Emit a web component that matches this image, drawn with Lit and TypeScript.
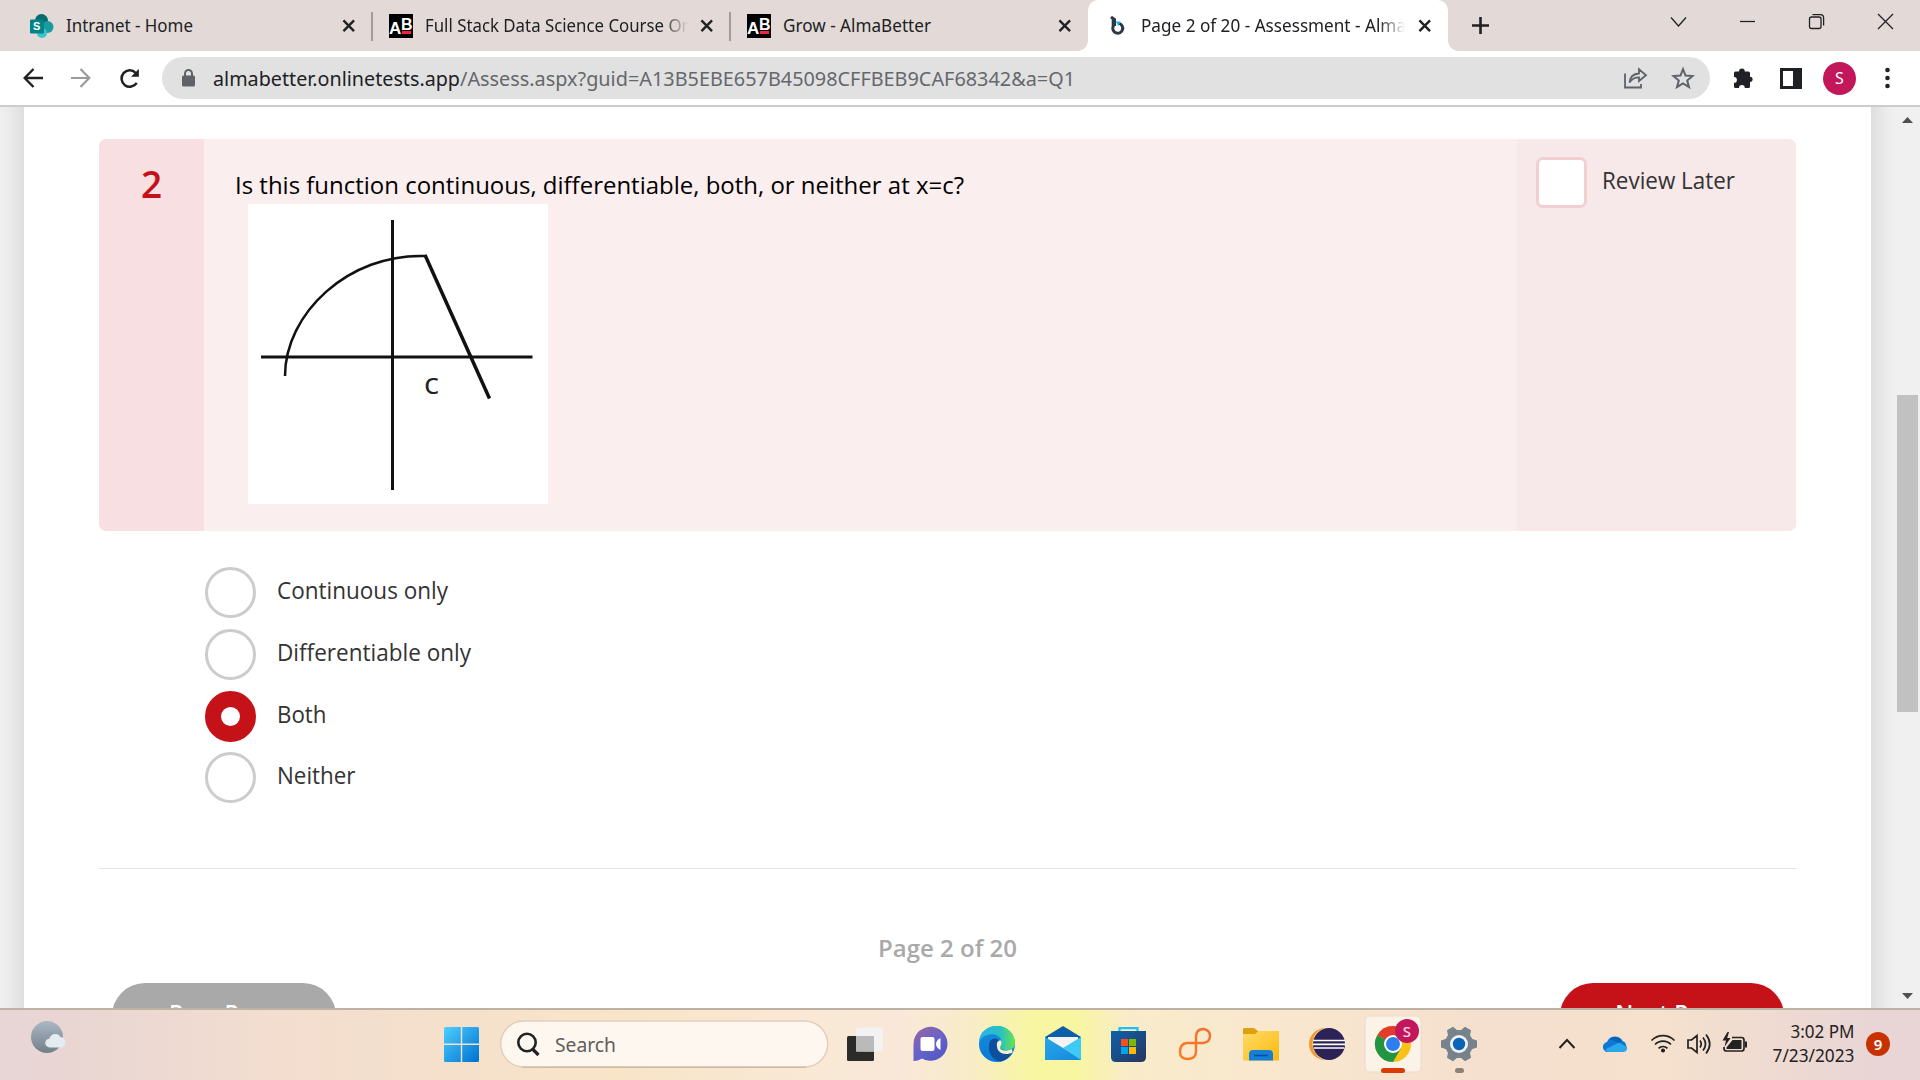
import { LitElement, html, svg, css } from "lit";
import { customElement } from "lit/decorators.js";

const closeX = html`<svg class="tx" viewBox="0 0 14 14"><path d="M1.5 1.5 12.5 12.5M12.5 1.5 1.5 12.5" /></svg>`;
const abIcon = html`<span class="ab"><b class="la">A</b><b class="lb">B</b><i></i></span>`;

@customElement("app-root")
export class AppRoot extends LitElement {
  static styles = css`
    :host { display: flex; flex-direction: column; width: 1920px; height: 1080px; overflow: hidden; background: #fff; font-family: "Noto Sans", "Open Sans", sans-serif; color: #202124; }
    * { box-sizing: border-box; }
    svg { display: block; flex: none; overflow: visible; }
    .strip { height: 51px; background: #e3dad7; display: flex; flex: none; }
    .tab { display: flex; align-items: center; height: 51px; flex: none; position: relative; }
    .t1 { width: 372px; padding-left: 30px; }
    .t2 { width: 358px; padding-left: 17px; }
    .t3 { width: 358px; padding-left: 17px; }
    .t4 { width: 360px; padding-left: 22px; background: #fff; border-radius: 10px 10px 0 0; }
    .t4::before, .t4::after { content: ""; position: absolute; bottom: 0; width: 10px; height: 10px; }
    .t4::before { left: -10px; background: radial-gradient(circle at 0 0, #e3dad7 9.5px, #fff 10px); }
    .t4::after { right: -10px; background: radial-gradient(circle at 100% 0, #e3dad7 9.5px, #fff 10px); }
    .ico { width: 24px; height: 24px; margin-right: 12px; }
    .bico { width: 16px; height: 20px; margin-right: 15px; }
    .title { height: 30px; white-space: nowrap; flex: none; }
    .title svg { height: 30px; }
    .title text { font: 18px "Noto Sans", sans-serif; fill: #202124; }
    .fade { overflow: hidden; -webkit-mask-image: linear-gradient(90deg, #000 calc(100% - 26px), transparent); mask-image: linear-gradient(90deg, #000 calc(100% - 26px), transparent); }
    .tx { width: 13.5px; height: 13.5px; margin-left: auto; margin-right: 17px; }
    .tx path { stroke: #202124; stroke-width: 2.5; }
    .sep::after { content: ""; position: absolute; right: -1px; top: 12px; width: 2px; height: 29px; background: #a19b99; }
    .ab { width: 24px; height: 24px; background: #000; margin-right: 12px; position: relative; overflow: hidden; color: #fff; font-family: "Liberation Sans", sans-serif; flex: none; }
    .ab b { position: absolute; font-size: 17px; line-height: 17px; }
    .ab .la { left: 0; top: 6px; }
    .ab .lb { left: 12px; top: 2px; font-size: 16px; }
    .ab i { position: absolute; left: 13px; top: 17.5px; width: 9px; height: 2.5px; background: #f22540; }
    .caps { margin-left: auto; display: flex; padding: 14px 27px 0 0; gap: 54px; }
    .caps svg { width: 15px; height: 15px; }
    .caps path, .caps rect { fill: none; stroke: #202124; stroke-width: 1.3; }
    .plus { margin: 17px 0 0 24px; width: 17px; height: 17px; }
    .tool { height: 56px; flex: none; display: flex; align-items: center; padding: 0 0 0 23px; border-bottom: 2px solid #cccccc; }
    .tool .bk { width: 20px; height: 20px; margin-right: 28px; }
    .tool .rl { width: 21px; height: 21px; margin-right: 22px; }
    .omni { width: 1548px; height: 42px; border-radius: 21px; background: #e1e1e1; display: flex; align-items: center; padding: 0 16px 0 20px; }
    .omni .url { margin-left: 18px; width: 864px; height: 42px; }
    .url text { font: 20px "Noto Sans", sans-serif; }
    .omni .right { margin-left: auto; display: flex; gap: 25px; align-items: center; }
    .puzzle { margin-left: 23px; }
    .side { margin-left: 26px; }
    .dots { margin-left: 29px; }
    .av { margin-left: 21px; width: 33px; height: 33px; border-radius: 50%; background: #c2185b; color: #fff; display: grid; place-items: center; font-size: 16px; }
    .main { height: 901px; flex: none; display: flex; overflow: hidden; background: #f0f0f0; }
    .ls { width: 24px; flex: none; background: linear-gradient(90deg, #f0f0f0, #e9e9e9 50%, #dedede); }
    .rs { width: 24px; flex: none; background: linear-gradient(90deg, #dedede, #e9e9e9 50%, #f0f0f0); }
    .bar { width: 25px; background: #f0f0f0; display: flex; flex-direction: column; align-items: center; padding: 10px 0 9px; flex: none; }
    .bar i { width: 21px; height: 317px; background: #c1c1c1; margin-top: 272px; }
    .bar svg { width: 11px; height: 6px; fill: #505050; }
    .bar .dn { margin-top: auto; }
    .panel { width: 1847px; flex: none; background: #fff; padding: 32px 75px 0; font-family: "Open Sans", sans-serif; }
    .card { height: 392px; display: flex; border-radius: 7px; overflow: hidden; }
    .num { width: 105px; flex: none; background: #f7dfe2; color: #c41218; font-size: 37px; font-weight: 600; text-align: center; line-height: 50px; padding-top: 20px; }
    .q { width: 1313px; flex: none; background: #faeeee; padding: 29px 0 0 31px; }
    svg.line { height: 36px; width: 760px; }
    .q .graph { margin-left: 13px; width: 300px; height: 300px; background: #fff; }
    .rev { flex: 1; background: #f7e8e9; display: flex; padding: 18px 0 0 19px; gap: 15px; }
    .box { width: 51px; height: 51px; border: 3px solid #f4cfd2; border-radius: 7px; background: #fff; flex: none; }
    .rev svg { width: 160px; height: 51px; }
    .opts { margin: 36px 0 0 106px; display: flex; flex-direction: column; gap: 11px; height: 236px; }
    .o { display: flex; gap: 21px; height: 51px; flex: none; }
    .o:last-child { margin-top: -1px; }
    .o .r { width: 51px; height: 51px; border: 3px solid #cccccc; border-radius: 50%; flex: none; }
    .o .on { border: 16px solid #c41218; }
    .o svg { width: 300px; height: 51px; }
    .panel text { font: 24px "Open Sans", sans-serif; fill: #333; }
    .hr { height: 1px; background: #e4e4e4; margin-top: 65px; }
    .pg { margin-left: 779px; margin-top: 62px; width: 160px; height: 40px; }
    .panel .pg text { font-weight: 600; fill: #a9a9a9; }
    .btns { display: flex; justify-content: space-between; padding: 0 12.5px; margin-top: 12px; }
    .btn { width: 224px; height: 66px; border-radius: 33px; background: #a9a9a9; color: #fff; font-weight: 600; font-size: 23px; text-align: center; line-height: 61px; }
    .btn.red { background: #c41218; }
    .task { height: 72px; flex: none; border-top: 2px solid #bfb1a3; background: linear-gradient(90deg, #e8d5d6 0, #e9d6d3 70px, #f2ddd0 260px, #f4e0cc 420px, #f8e5c8 620px, #f8e8d4 800px, #f9e8d9 900px, #f8ecc8 970px, #f8f6a0 1035px, #f8f6a0 1075px, #f9ebca 1130px, #f9e8ce 1250px, #f5dfcf 1500px, #f5e1cd 1660px, #e9d5d5 1870px); display: flex; }
    .task > svg { width: 1920px; height: 70px; }
  `;

  label(text: string, width: number, baseline: number, cls = "", fill = "#333") {
    return html`<svg class=${cls}><text x="0" y=${baseline} textLength=${width} lengthAdjust="spacingAndGlyphs" fill=${fill} style="fill:${fill}">${text}</text></svg>`;
  }

  tabTitle(text: string, box: number, width: number, fade = false) {
    return html`<div class="title ${fade ? "fade" : ""}" style="width:${box}px"><svg width=${box}><text x="0" y="21" textLength=${width} lengthAdjust="spacingAndGlyphs">${text}</text></svg></div>`;
  }

  chrome() {
    return html`
      <div class="strip">
        <div class="tab t1 sep">
          <svg class="ico" viewBox="0 0 24 24"><circle cx="11.5" cy="6.5" r="6.5" fill="#036c70"/><circle cx="17.5" cy="13" r="6" fill="#1a9ba1"/><circle cx="12" cy="19" r="5" fill="#37c6d0"/><rect y="5.5" width="14" height="14" rx="1.2" fill="#038387"/><text x="6.6" y="16.2" font-family="Liberation Sans" font-weight="700" font-size="11" text-anchor="middle" fill="#fff">S</text></svg>
          ${this.tabTitle("Intranet - Home", 140, 127)}${closeX}
        </div>
        <div class="tab t2 sep">${abIcon}${this.tabTitle("Full Stack Data Science Course On", 263, 267, true)}${closeX}</div>
        <div class="tab t3">${abIcon}${this.tabTitle("Grow - AlmaBetter", 160, 148)}${closeX}</div>
        <div class="tab t4">
          <svg class="bico" viewBox="0 0 16 20"><path d="M1 1 4.5 3.5V10M8.8 7.4a5 5 0 1 1-5.6 2.8V2" fill="none" stroke="#2c3844" stroke-width="3"/><path d="M5.8 5.5h5L8.3 10z" fill="#19b2e8"/></svg>
          ${this.tabTitle("Page 2 of 20 - Assessment - Alma", 264, 265, true)}${closeX}
        </div>
        <svg class="plus" viewBox="0 0 17 17"><path d="M8.5 0V17M0 8.5H17" stroke="#202124" stroke-width="2.6"/></svg>
        <div class="caps">
          <svg viewBox="0 0 15 15"><path d="M0 3.5 7.5 12 15 3.5"/></svg>
          <svg viewBox="0 0 15 15"><path d="M0 7.5H15"/></svg>
          <svg viewBox="0 0 15 15"><rect x=".5" y="3" width="11.5" height="11.5" rx="2"/><path d="M3.5 .6H11.5Q14.6 .6 14.6 4V11.5"/></svg>
          <svg viewBox="0 0 15 15"><path d="M0 0 15 15M15 0 0 15"/></svg>
        </div>
      </div>
      <div class="tool">
        <svg class="bk" viewBox="0 0 20 20" fill="none" stroke="#202124" stroke-width="2.4"><path d="M20 10H2M10.5 1 1.7 10l8.8 9"/></svg>
        <svg class="bk" viewBox="0 0 20 20" fill="none" stroke="#9b9b9b" stroke-width="2.2"><path d="M0 10H18M9.5 1 18.3 10l-8.8 9"/></svg>
        <svg class="rl" viewBox="0 0 22 22"><path d="M18.6 15.5A8.6 8.6 0 1 1 17.4 5" fill="none" stroke="#202124" stroke-width="2.6"/><path d="M20.8 1V9.2H12.6z" fill="#202124"/></svg>
        <div class="omni">
          <svg width="13" height="18" viewBox="0 0 13 18"><rect y="6.5" width="13" height="11" rx="1.5" fill="#5f6368"/><path d="M3 7V4.5a3.5 3.5 0 0 1 7 0V7" fill="none" stroke="#5f6368" stroke-width="2"/></svg>
          <svg class="url"><text x="0" y="28.5" textLength="247" lengthAdjust="spacingAndGlyphs" fill="#202124">almabetter.onlinetests.app</text><text x="247" y="28.5" textLength="615" lengthAdjust="spacingAndGlyphs" fill="#65686b">/Assess.aspx?guid=A13B5EBE657B45098CFFBEB9CAF68342&amp;a=Q1</text></svg>
          <div class="right">
            <svg width="23" height="22" viewBox="0 0 23 22" fill="none" stroke="#5f6368" stroke-width="1.8"><path d="M1 6.5V20.5H17V17"/><path d="M5.5 15.5C6 9.5 10 6.8 15 6.5V2.2L22 8.2 15 14V10.3C10.5 10.3 7.5 12 5.5 15.5z"/></svg>
            <svg width="22" height="22" viewBox="0 0 22 22"><path d="M11 2.2 13.5 8.5 20.5 9 15.2 13.5 17 20.2 11 16.5 5 20.2 6.8 13.5 1.5 9 8.5 8.5z" fill="none" stroke="#5f6368" stroke-width="2"/></svg>
          </div>
        </div>
        <svg class="puzzle" width="21" height="22" viewBox="0 0 21 22" fill="#202124"><path d="M6 4.5a2.800 2.800 0 0 1 5.800 0H15.500Q17 4.500 17 6V9.700a2.600 2.600 0 0 1 0 5.200V19.500Q17 21 15.500 21H11.800a2.900 2.900 0 0 0-5.800 0H2.500Q1 21 1 19.500V15.800a2.900 2.900 0 0 0 0-5.800V6Q1 4.500 2.500 4.500z"/></svg>
        <svg class="side" width="22" height="21" viewBox="0 0 22 21"><path d="M0 0H22V21H0zM3 3V18H13V3z" fill="#202124" fill-rule="evenodd"/></svg>
        <div class="av">S</div>
        <svg class="dots" width="5" height="20" viewBox="0 0 5 20" fill="#202124"><circle cx="2.500" cy="2" r="2.300"/><circle cx="2.500" cy="10" r="2.300"/><circle cx="2.500" cy="18" r="2.300"/></svg>
      </div>`;
  }

  graph() {
    return html`<svg class="graph" viewBox="0 0 300 300" fill="none" stroke="#111"><path d="M144.500 16V286M13 153H284.500" stroke-width="3"/><path d="M37 172C37 110 100 49 178 52" stroke-width="2.500"/><path d="M177 51 241.500 194.500" stroke-width="3.500"/><text x="176" y="190" stroke="none" textLength="15" lengthAdjust="spacingAndGlyphs" style="font:30px 'Open Sans',sans-serif;fill:#222">c</text></svg>`;
  }

  page() {
    const opts: [string, number][] = [["Continuous only", 171], ["Differentiable only", 194], ["Both", 49.5], ["Neither", 78.5]];
    return html`<div class="main">
      <div class="ls"></div>
      <div class="panel">
        <div class="card">
          <div class="num">2</div>
          <div class="q">${this.label("Is this function continuous, differentiable, both, or neither at x=c?", 729, 26, "line", "#000")}${this.graph()}</div>
          <div class="rev"><div class="box"></div>${this.label("Review Later", 133, 32)}</div>
        </div>
        <div class="opts">${opts.map(([t, w], i) => html`<div class="o"><div class="r ${i === 2 ? "on" : ""}"></div>${this.label(t, w, 32)}</div>`)}</div>
        <div class="hr"></div>
        <svg class="pg"><text x="0" y="26" textLength="139" lengthAdjust="spacingAndGlyphs">Page 2 of 20</text></svg>
        <div class="btns"><div class="btn">Prev Page</div><div class="btn red">Next Page</div></div>
      </div>
      <div class="rs"></div>
      <div class="bar"><svg viewBox="0 0 11 6"><path d="M0 6 5.500 0 11 6z"/></svg><i></i><svg class="dn" viewBox="0 0 11 6"><path d="M0 0 5.500 6 11 0z"/></svg></div>
    </div>`;
  }

  gear() {
    const teeth = [0, 60, 120, 180, 240, 300];
    return svg`<g transform="translate(1459 34)"><circle r="14" fill="#76838c"/>${teeth.map((a) => svg`<path d="M-5.500-12 -3.500-18H3.500L5.500-12z" fill="#76838c" transform="rotate(${a + 30})"/>`)}<circle r="9" fill="#eef2f6"/><circle r="6.200" fill="#0c64b8"/></g>`;
  }

  taskbar() {
    // One canvas for the desktop bar; its origin sits just below the bar's top border.
    return html`<div class="task"><svg viewBox="0 0 1920 70">
      <defs>
        <linearGradient id="moon" x2="0" y2="1"><stop stop-color="#aab8c6"/><stop offset="1" stop-color="#737f87"/></linearGradient>
        <linearGradient id="win" x2="1" y2="1"><stop stop-color="#4cd0ff"/><stop offset="1" stop-color="#0070d0"/></linearGradient>
        <linearGradient id="chat" x1="0" x2=".7" y2="1"><stop stop-color="#a0629a"/><stop offset=".5" stop-color="#6a64c8"/><stop offset="1" stop-color="#5558c8"/></linearGradient>
        <linearGradient id="edge" x2="1"><stop stop-color="#2ab0ee"/><stop offset=".6" stop-color="#28c2c0"/><stop offset="1" stop-color="#6be44c"/></linearGradient>
        <linearGradient id="edge2" x2="0" y2="1"><stop stop-color="#168fd8"/><stop offset="1" stop-color="#0878d8"/></linearGradient>
        <linearGradient id="store" x2="1" y2="1"><stop stop-color="#0d62ae"/><stop offset="1" stop-color="#27355c"/></linearGradient>
        <linearGradient id="fold" x2="1" y2="1"><stop stop-color="#ffdc68"/><stop offset="1" stop-color="#fbb90e"/></linearGradient>
        <linearGradient id="mail" x2="1" y2="1"><stop stop-color="#28a8ea"/><stop offset="1" stop-color="#1688da"/></linearGradient>
        <linearGradient id="loop" x1="1" x2="0" y2="1"><stop stop-color="#f07030"/><stop offset="1" stop-color="#ff7a20"/></linearGradient>
      </defs>
      <circle cx="47" cy="27" r="16" fill="url(#moon)"/><path d="M50 37.500a4.500 4.500 0 0 1-.5-9 6 6 0 0 1 11-1.500 5.300 5.300 0 0 1 .5 10.500z" fill="#e4ebf1"/>
      <g fill="url(#win)"><path d="M445.500 17H460.800V33.500H444V18.500Q444 17 445.500 17zM462.200 17H477.500Q479 17 479 18.500V33.500H462.200zM444 35H460.800V52H445.500Q444 52 444 50.500zM462.200 35H479V50.500Q479 52 477.500 52H462.200z"/></g>
      <rect x="500.700" y="11" width="327" height="46" rx="23" fill="#fdf7f0" stroke="#e2cfba" stroke-width="1.500"/><path d="M522 57.200H806" stroke="#cdbda6" stroke-width="1.500"/>
      <g fill="none" stroke="#222" stroke-width="2.600"><circle cx="527" cy="32.500" r="8.700"/><path d="M532.500 39 538.500 45" stroke-width="3.200"/></g>
      <text x="555" y="41.500" textLength="61" lengthAdjust="spacingAndGlyphs" font-family="Noto Sans" font-size="20" fill="#605c58">Search</text>
      <rect x="847" y="26" width="27" height="25" rx="1.500" fill="#2b2b29"/><rect x="856" y="17.500" width="27" height="24" rx="1.500" fill="#f2f2f2"/><rect x="856" y="26" width="18" height="15.500" fill="#bababa"/>
      <path d="M913.500 51V34A17 17 0 1 1 922 48.500Q918 51 913.500 51z" fill="url(#chat)"/><rect x="920.500" y="27" width="14" height="14" rx="2" fill="#fff"/><path d="M940.500 28V40Q936 37.500 936 34T940.500 28z" fill="#fff"/>
      <g><circle cx="997" cy="34" r="18" fill="url(#edge2)"/><path d="M979 33C979 22 987 16 997 16 1008 16 1015 24 1015 33 1015 38 1011 40 1006 40 1002 40 1000 39 1000 37.500 1001 36 1002 34 1001.500 31 1000 25 994 23.500 989 24.500 983 26 980 29 979 33z" fill="url(#edge)"/><path d="M990 31C987 38 990 50 1001 51.500 1006 50 1010 47 1012.500 42.500 1005 46 997 43 997 36 996 33 997 31 999 30 996 27.500 992 28 990 31z" fill="#0d4f9c"/><path d="M1001 30.500C1003 35 999 36.500 1000.500 39 1003 41.500 1009 40.500 1012 39L1012.500 42.500C1005 46 997 43 997 36 996.500 33 998 30 1001 30.500z" fill="#f8f0c4"/></g>
      <path d="M1045 27 1063 16 1081 27V32H1045z" fill="#0b5ea8"/><path d="M1048 27H1078V40H1048z" fill="#f3f3f6"/><path d="M1045 27 1081 49V50H1045z" fill="url(#mail)"/><path d="M1081 27V50L1063 38z" fill="#3dcbf6"/>
      <path d="M1119.500 24V18.200H1137.500V24" fill="none" stroke="#1cc0f4" stroke-width="2.200"/><path d="M1111 21H1146V47Q1146 52 1141 52H1116Q1111 52 1111 47z" fill="url(#store)"/><path d="M1121 29h7v7h-7z" fill="#f25022"/><path d="M1129 29h7v7h-7z" fill="#7fba00"/><path d="M1121 37h7v7h-7z" fill="#00a4ef"/><path d="M1129 37h7v7h-7z" fill="#ffb900"/>
      <path d="M1186 33H1203Q1210 32 1210 26T1203.500 19Q1196 19 1196 27V41Q1196 49 1188 49T1180 42Q1180 33.500 1187 33" fill="none" stroke="url(#loop)" stroke-width="2.400"/>
      <path d="M1243 19.500Q1243 18 1244.500 18H1254L1258 21H1277.500Q1279 21 1279 23V28H1243z" fill="#dfa010"/><path d="M1243 24H1255L1258.500 21H1279V50.500H1243z" fill="url(#fold)"/><path d="M1249 50.500V44Q1249 40 1253 40H1269Q1273 40 1273 44V50.500z" fill="#1380d6"/><path d="M1254 45.500H1268" stroke="#0a4c98" stroke-width="1.600"/>
      <circle cx="1325" cy="34" r="16" fill="#f39a30"/><circle cx="1329" cy="34" r="16.500" fill="#f9e8d0"/><circle cx="1329" cy="34" r="16" fill="#2c2255"/><path d="M1313 30.500H1345M1313 34.300H1345M1314 38H1344" stroke="#fff" stroke-width="1.700"/>
      <rect x="1365" y="6" width="56" height="56" rx="5" fill="#fbf2e8" stroke="#eadccb"/>
      <g transform="translate(1393 34)"><circle r="18" fill="#fbc116"/><path d="M0 0 -15.600-9A18 18 0 0 1 15.600-9z" fill="#e33b2e"/><path d="M-15.600-9A18 18 0 0 0 0 18L7.800 4.500 0 0z" fill="#229544"/><circle r="9" fill="#fff"/><circle r="7" fill="#2f7ef0"/></g>
      <circle cx="1407" cy="21" r="12" fill="#c2185b"/><text x="1407" y="26.500" text-anchor="middle" font-family="Noto Sans" font-weight="500" font-size="15" fill="#f7d8e4">S</text>
      <rect x="1381" y="58" width="24" height="5" rx="2.500" fill="#da3b01"/><rect x="1455" y="58" width="9" height="5" rx="2.500" fill="#8b8178"/>
      ${this.gear()}
      <path d="M1559.500 38 1567 30 1574.500 38" fill="none" stroke="#222" stroke-width="2"/>
      <path d="M1609 42A5 5 0 0 1 1607 32 8.500 8.500 0 0 1 1622.500 31 6 6 0 0 1 1623 42z" fill="#0f78d4"/><path d="M1606 39 1619 32.500 1627 37Q1628 42 1622 42H1609Q1605 42 1606 39z" fill="#28a8ea"/><path d="M1610 29A8.500 8.500 0 0 1 1622.500 31L1619 33z" fill="#0364b8"/>
      <g fill="none" stroke="#222" stroke-width="1.700"><path d="M1651.500 30.500A16 16 0 0 1 1674.500 30.500M1655 34.500A11 11 0 0 1 1671 34.500M1658.500 38.300A6.500 6.500 0 0 1 1667.500 38.300"/><circle cx="1663" cy="40.500" r="1.200" fill="#222"/>
      <path d="M1688 30H1691.500L1697 25.500V42.500L1691.500 38H1688zM1700 30.500Q1702.500 34 1700 37.500M1703 27.500Q1708 34 1703 40.500M1706 24.500Q1713.500 34 1706 43.500"/>
      <path d="M1732 27.500H1741.500Q1744 27.500 1744 30V38.500Q1744 41 1741.500 41H1726.500Q1724 41 1724 38.500V37"/></g><path d="M1726.500 39V37.500L1732.500 30H1741.500V39zM1745 31.500H1747V37.500H1745z" fill="#222"/><path d="M1727.500 22 1722.500 30.500H1726L1724.500 37 1730.500 28H1727.200L1729 22z" fill="#222"/>
      <g font-family="Noto Sans" font-size="18" fill="#222"><text x="1790.500" y="28" textLength="64" lengthAdjust="spacingAndGlyphs">3:02 PM</text><text x="1772.500" y="52" textLength="82" lengthAdjust="spacingAndGlyphs">7/23/2023</text></g>
      <circle cx="1878" cy="34" r="12" fill="#c83200"/><text x="1878" y="39.500" text-anchor="middle" font-family="Noto Sans" font-weight="600" font-size="15" fill="#fff">9</text>
    </svg></div>`;
  }

  render() {
    return html`${this.chrome()}${this.page()}${this.taskbar()}`;
  }
}
